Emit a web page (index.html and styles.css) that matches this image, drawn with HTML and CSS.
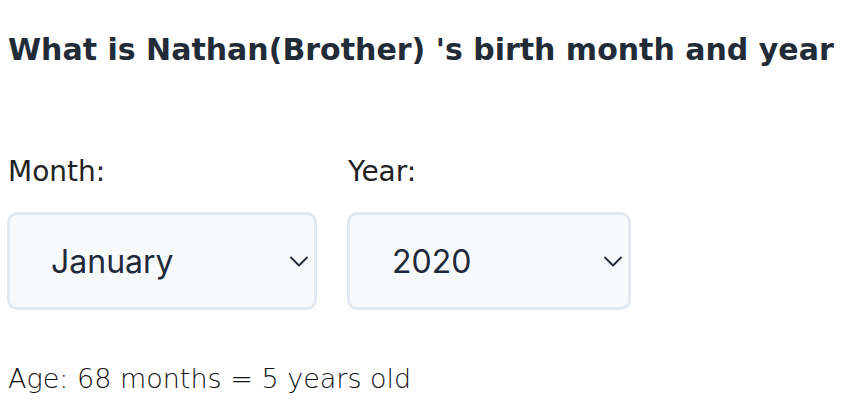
FILE: index.html
```html
<!DOCTYPE html>
<html lang="en">
<head>
<meta charset="utf-8">
<title>Birth month and year</title>
<link rel="stylesheet" href="styles.css">
</head>
<body>
<main class="page">
  <h1 class="title">What is Nathan(Brother) 's birth month and year</h1>
  <div class="fields">
    <div class="field">
      <label class="field-label" for="month">Month:</label>
      <div class="select-box select-box--month">
        <select id="month" class="select">
          <option>January</option>
        </select>
        <svg class="chevron" width="18" height="11" viewBox="0 0 18 11"><path d="M1 1.5 L9 9.5 L17 1.5" fill="none" stroke="#1f2937" stroke-width="1.8" stroke-linecap="round" stroke-linejoin="round"/></svg>
      </div>
    </div>
    <div class="field">
      <label class="field-label" for="year">Year:</label>
      <div class="select-box select-box--year">
        <select id="year" class="select">
          <option>2020</option>
        </select>
        <svg class="chevron" width="18" height="11" viewBox="0 0 18 11"><path d="M1 1.5 L9 9.5 L17 1.5" fill="none" stroke="#1f2937" stroke-width="1.8" stroke-linecap="round" stroke-linejoin="round"/></svg>
      </div>
    </div>
  </div>
  <p class="age">Age: 68 months = 5 years old</p>
</main>
</body>
</html>
```

FILE: styles.css
```css
html, body {
  margin: 0;
  padding: 0;
  background: #ffffff;
}
.page {
  padding: 0 8px;
  font-family: "DejaVu Sans", "Open Sans", sans-serif;
}
.title {
  margin: 30px 0 0;
  font-size: 30px;
  line-height: 40px;
  font-weight: 700;
  color: #222b38;
}
.fields {
  display: flex;
  gap: 31px;
  margin-top: 84px;
}
.field {
  display: flex;
  flex-direction: column;
}
.field-label {
  font-size: 28px;
  line-height: 36px;
  color: #222222;
  margin-bottom: 22px;
}
.select-box {
  display: flex;
  align-items: center;
  height: 98px;
  box-sizing: border-box;
  border: 3px solid #e2e8f0;
  border-radius: 10px;
  background: #f7f9fb;
  padding: 0 6px 0 41px;
}
.select-box--month {
  width: 310px;
  margin-left: -1px;
}
.select-box--year {
  width: 284px;
  margin-left: -1px;
  padding-left: 42px;
}
.select {
  flex: 1;
  min-width: 0;
  appearance: none;
  -webkit-appearance: none;
  border: 0;
  background: transparent;
  font-family: "Inter", sans-serif;
  font-size: 32px;
  color: #1e293b;
  padding: 0;
  outline: none;
}
.chevron {
  flex: none;
}
.age {
  margin: 51px 0 0;
  font-size: 27px;
  line-height: 36px;
  font-weight: 300;
  color: #111111;
}
```
